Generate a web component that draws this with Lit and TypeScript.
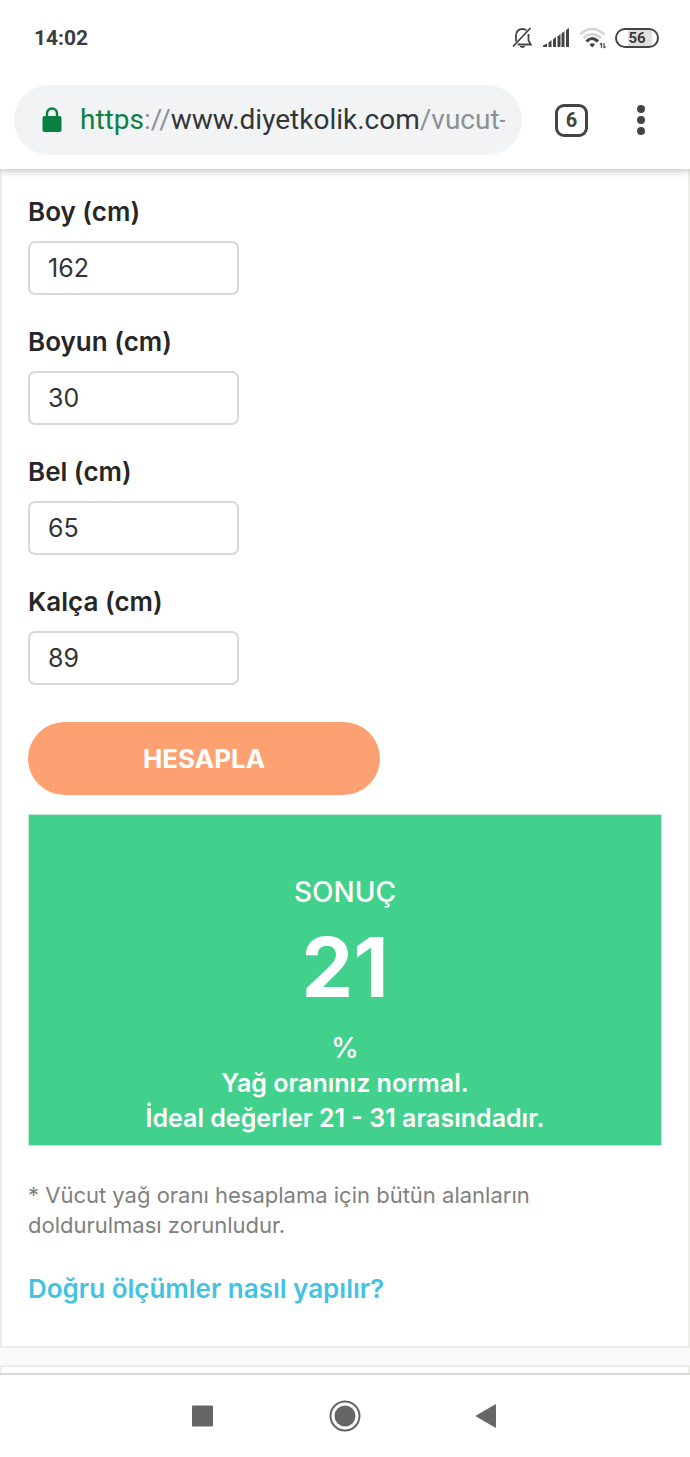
import { LitElement, html, css, svg } from "lit";
import { customElement, state } from "lit/decorators.js";

interface Field {
  id: string;
  label: string;
  value: string;
}

@customElement("status-bar")
class StatusBar extends LitElement {
  static styles = css`
    :host {
      display: flex;
      align-items: center;
      justify-content: space-between;
      height: 75px;
      padding: 0 31px 0 34px;
      box-sizing: border-box;
      color: #3c3c3c;
      font: 700 21px/24px Roboto, sans-serif;
    }
    .icons {
      display: flex;
      align-items: center;
    }
    .bell { margin-right: 10px; }
    .signal { margin-right: 10px; }
    .wifi { margin-right: 9px; }
    svg { display: block; }
    .battery {
      box-sizing: border-box;
      width: 44px;
      height: 20px;
      border: 2px solid #444;
      border-radius: 10px;
      background: linear-gradient(90deg, #fff 28%, #e0e0e0 28%, #e0e0e0 88%, #fff 88%);
      font: 700 15px/16px Roboto, sans-serif;
      text-align: center;
    }
  `;

  render() {
    return html`
      <time>14:02</time>
      <div class="icons">
        <svg class="bell" width="21" height="22" viewBox="0 0 21 22" fill="none" stroke="#444" stroke-width="1.800">
          <path d="M4 14.500V8.500C4 4.500 6.500 2 10.500 2C12 2 13.500 2.400 14.500 3.300M16.500 7V13.500L18.800 17.500H5.500" />
          <path d="M1 19.500L18.500 1" />
          <path d="M8 19.500Q10.500 21.500 13 19.500Z" fill="#444" stroke-width="1" />
        </svg>
        <svg class="signal" width="26" height="20" viewBox="0 0 26 20" fill="#444">
          <path d="M0 17.500L4 15.500V19H0ZM5.500 14.500L8.500 12V19H5.500ZM10 11.500L13 9V19H10ZM14.500 8.500L17.500 6V19H14.500ZM18.500 5.500L21.500 3V19H18.500ZM23 2L26 0V19H23Z" />
        </svg>
        <svg class="wifi" width="27" height="22" viewBox="0 0 27 22" fill="none">
          <path d="M1 7.500Q13 -3.500 25.500 7.500" stroke="#d4d4d4" stroke-width="2.600" />
          <path d="M4.500 11Q13 3.500 22 11" stroke="#d4d4d4" stroke-width="2.600" />
          <path d="M7.500 14.500Q13 8.500 19 14.500" stroke="#444" stroke-width="3.200" />
          <path d="M10.500 17.500Q13.200 15 16 17.500L13.200 20.500Z" fill="#444" />
          <path d="M22.500 16V21M25 16V21M21 17.800L22.500 16M26.500 19.500L25 21" stroke="#555" stroke-width="1.300" />
        </svg>
        <div class="battery">56</div>
      </div>
    `;
  }
}

@customElement("browser-bar")
class BrowserBar extends LitElement {
  static styles = css`
    :host {
      display: flex;
      align-items: center;
      height: 94px;
      box-sizing: border-box;
      padding: 0 39px 4px 14px;
      background: #fff;
      box-shadow: 0 1px 8px rgba(0, 0, 0, 0.3);
      clip-path: inset(0 0 -12px 0);
      position: relative;
      z-index: 1;
    }
    svg { display: block; }
    .address {
      flex: 1;
      min-width: 0;
      display: flex;
      align-items: center;
      gap: 18px;
      height: 70px;
      box-sizing: border-box;
      padding: 0 17px 0 28px;
      border-radius: 35px;
      background: #f1f3f4;
    }
    .lock { flex: none; }
    .url {
      flex: 1;
      min-width: 0;
      overflow: hidden;
      white-space: nowrap;
      font: 400 28px/40px Roboto, sans-serif;
      color: #8e9194;
      text-decoration: none;
    }
    .secure { color: #0b8043; }
    .domain { color: #333639; }
    button {
      border: 0;
      padding: 0;
      background: none;
      color: #444;
    }
    .tabs {
      margin-left: 33px;
      width: 33px;
      height: 33px;
      border: 3px solid #444;
      border-radius: 9px;
      font: 700 20px/26px Roboto, sans-serif;
    }
    .more { margin-left: 43px; width: 20px; display: grid; place-items: center; }
  `;

  render() {
    return html`
      <div class="address">
        <svg class="lock" width="20" height="26" viewBox="0 0 20 26">
          <path d="M5 11V6.500A5 5 0 0 1 15 6.500V11" fill="none" stroke="#0b8043" stroke-width="2.400" />
          <rect x="0.500" y="9" width="19" height="16" rx="2" fill="#0b8043" />
        </svg>
        <a class="url" href="#"><span class="secure">https</span>://<span class="domain">www.diyetkolik.com</span>/vucut-</a>
      </div>
      <button class="tabs" aria-label="6 sekme">6</button>
      <button class="more" aria-label="Menü">
        <svg width="8" height="30" viewBox="0 0 8 30" fill="#444">
          <circle cx="4" cy="4" r="4" /><circle cx="4" cy="15" r="4" /><circle cx="4" cy="26" r="4" />
        </svg>
      </button>
    `;
  }
}

@customElement("fat-calculator")
class FatCalculator extends LitElement {
  static styles = css`
    :host {
      display: block;
      padding: 28px 26px 42px;
      border: 2px solid #ededea;
      border-top: 0;
      background: #fff;
      font: 400 25px/30px Inter, sans-serif;
      color: #262626;
    }
    .field {
      display: flex;
      flex-direction: column;
      align-items: flex-start;
      gap: 14px;
      margin-bottom: 32px;
    }
    label { font-size: 26px; font-weight: 600; }
    input {
      box-sizing: border-box;
      width: 211px;
      max-width: 100%;
      height: 54px;
      padding: 0 18px;
      border: 2px solid #d8d8d8;
      border-radius: 7px;
      background: #fff;
      font: inherit;
      color: #333;
    }
    .submit {
      display: block;
      width: 352px;
      max-width: 100%;
      height: 73px;
      margin-top: 37px;
      border: 0;
      border-radius: 37px;
      background: #fda172;
      color: #fff;
      font: 700 26px/30px Inter, sans-serif;
    }
    .result {
      margin-top: 19px;
      padding: 60px 20px 9px;
      border: 1px solid #c4ecd8;
      background: #42d08d;
      color: #fff;
      text-align: center;
      font-weight: 600;
      line-height: 35px;
    }
    .title, .unit { font-size: 28px; font-weight: 500; }
    .number { font-size: 82px; line-height: 116px; font-weight: 700; margin-bottom: 5px; }
    p { margin: 0; }
    .note { margin-top: 34px; font-size: 22px; color: #808080; }
    .help { margin-top: 34px; font-size: 26px; }
    a { color: #42c3e3; font-weight: 600; text-decoration: none; }
  `;

  @state() private fields: Field[] = [
    { id: "boy", label: "Boy (cm)", value: "162" },
    { id: "boyun", label: "Boyun (cm)", value: "30" },
    { id: "bel", label: "Bel (cm)", value: "65" },
    { id: "kalca", label: "Kalça (cm)", value: "89" },
  ];

  render() {
    return html`
      <form @submit=${(e: Event) => e.preventDefault()}>
        ${this.fields.map(
          (f) => html`<div class="field">
            <label for=${f.id}>${f.label}</label>
            <input id=${f.id} type="text" inputmode="numeric" .value=${f.value} />
          </div>`
        )}
        <button class="submit" type="submit">HESAPLA</button>
      </form>
      <div class="result">
        <p class="title">SONUÇ</p>
        <p class="number">21</p>
        <p class="unit">%</p>
        <p>Yağ oranınız normal.</p>
        <p>İdeal değerler 21 - 31 arasındadır.</p>
      </div>
      <p class="note">* Vücut yağ oranı hesaplama için bütün alanların doldurulması zorunludur.</p>
      <p class="help"><a href="#">Doğru ölçümler nasıl yapılır?</a></p>
    `;
  }
}

@customElement("app-root")
class AppRoot extends LitElement {
  static styles = css`
    :host {
      display: flex;
      flex-direction: column;
      min-height: 100vh;
      background: #fff;
    }
    .page { background: #fafafa; }
    .next {
      margin-top: 17px;
      height: 6px;
      border: 2px solid #ededea;
      border-bottom: 0;
      background: #fff;
    }
    nav {
      flex: 1;
      min-height: 80px;
      display: flex;
      justify-content: center;
      align-items: center;
      gap: 110px;
      border-top: 2px solid #d9d9d9;
      background: #fff;
    }
    nav button {
      display: grid;
      place-items: center;
      width: 32px;
      height: 32px;
      padding: 0;
      border: 0;
      background: none;
    }
    nav svg { display: block; }
  `;

  private navButton(label: string, shape: unknown) {
    return html`<button aria-label=${label}>
      <svg width="32" height="32" viewBox="0 0 32 32" fill="#666">${shape}</svg>
    </button>`;
  }

  render() {
    return html`
      <status-bar></status-bar>
      <browser-bar></browser-bar>
      <main class="page">
        <fat-calculator></fat-calculator>
        <div class="next"></div>
      </main>
      <nav>
        ${this.navButton("Son uygulamalar", svg`<rect x="5" y="5.500" width="21" height="21" rx="1" />`)}
        ${this.navButton("Ana ekran", svg`<circle cx="16" cy="16" r="10.500" /><circle cx="16" cy="16" r="14.500" fill="none" stroke="#666" stroke-width="2" />`)}
        ${this.navButton("Geri", svg`<path d="M5.500 15.200L24 4.500Q25 4 25 5V27Q25 28 24 27.500L5.500 16.800Q4 16 5.500 15.200Z" />`)}
      </nav>
    `;
  }
}
